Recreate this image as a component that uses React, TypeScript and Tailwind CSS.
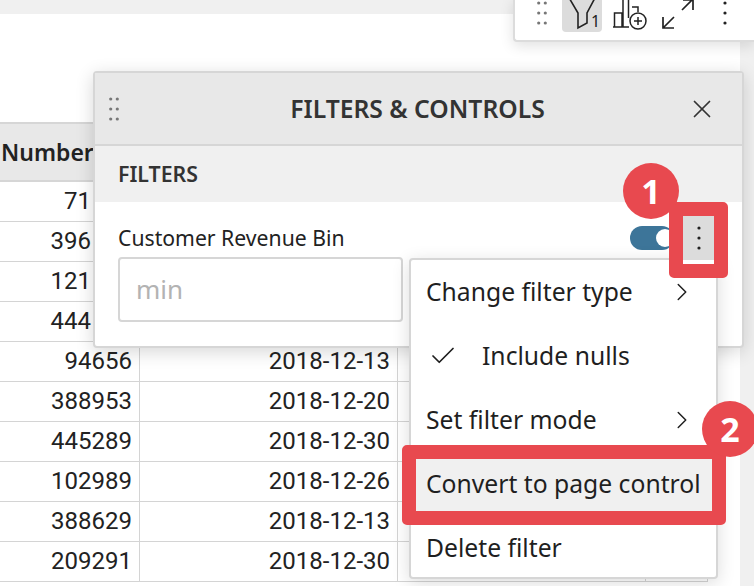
import { Check, ChevronRight, X } from 'lucide-react';

const rows = [
  ['71', '', true],
  ['396', '', true],
  ['121', '', true],
  ['444', '', true],
  ['94656', '2018-12-13'],
  ['388953', '2018-12-20'],
  ['445289', '2018-12-30'],
  ['102989', '2018-12-26'],
  ['388629', '2018-12-13'],
  ['209291', '2018-12-30'],
];

function Grip({ className }: { className: string }) {
  return (
    <svg width="10" height="26" viewBox="0 0 10 26" className={className} fill="#777">
      <circle cx="1.7" cy="3" r="1.6" />
      <circle cx="8.3" cy="3" r="1.6" />
      <circle cx="1.7" cy="13" r="1.6" />
      <circle cx="8.3" cy="13" r="1.6" />
      <circle cx="1.7" cy="23" r="1.6" />
      <circle cx="8.3" cy="23" r="1.6" />
    </svg>
  );
}

function Dots({ className }: { className: string }) {
  return (
    <svg width="6" height="26" viewBox="0 0 6 26" className={className} fill="#222">
      <circle cx="3" cy="3" r="1.6" />
      <circle cx="3" cy="13" r="1.6" />
      <circle cx="3" cy="23" r="1.6" />
    </svg>
  );
}

function Toolbar() {
  return (
    <div className="absolute right-0 top-[-2px] flex h-[44px] w-[241px] items-end rounded-bl-[4px] border-b-2 border-l-2 border-[#dcdcdc] bg-white shadow-[0_4px_14px_rgba(0,0,0,0.12)]">
      <Grip className="mb-[14px] ml-[22px] shrink-0" />
      <div className="mb-[8px] ml-[15px] flex h-[36px] w-[40px] shrink-0 items-end rounded-[4px] bg-[#dcdcdc]">
        <svg width="29" height="36" viewBox="0 0 29 36" fill="none" stroke="#222" strokeWidth="1.6" className="shrink-0 overflow-visible">
          <path d="M6 0 L16 17 V32 L25 27 V17 L34 0" />
        </svg>
        <span className="pb-[1px] text-[16px] leading-[20px] text-[#222]">1</span>
      </div>
      <svg width="36" height="34" viewBox="0 0 36 34" fill="none" stroke="#222" strokeWidth="1.5" className="mb-[10px] ml-[9px] shrink-0">
        <path d="M2 31 H18 M3.5 31 V17 H11 V31 M12 31 V0 H17.5 V22 M21 11 H27 V16" />
        <circle cx="27" cy="25" r="8" />
        <path d="M27 21 V29 M23 25 H31" />
      </svg>
      <svg width="36" height="34" viewBox="0 0 36 34" fill="none" stroke="#222" strokeWidth="1.7" className="mb-[10px] ml-[13px] shrink-0">
        <path d="M3 32 L14 21 M3 21 V32 H14" />
        <path d="M22 14 L33 3 M23 4 H33 V14" />
      </svg>
      <Dots className="mb-[14px] ml-[26px] shrink-0" />
    </div>
  );
}

function MenuItem({ label, chevron, check, active }: { label: string; chevron?: boolean; check?: boolean; active?: boolean }) {
  return (
    <div className={`flex h-[64px] items-center px-[15px] text-[#1f1f1f] ${active ? 'bg-[#f0f0f0]' : ''}`}>
      {check && <Check className="ml-[2px] mr-[24px] h-[30px] w-[30px] shrink-0" strokeWidth={1.4} />}
      <span className="whitespace-nowrap text-[24.7px]">{label}</span>
      {chevron && <ChevronRight className="ml-auto mr-[4px] h-[30px] w-[30px] shrink-0" strokeWidth={1.2} />}
    </div>
  );
}

function Badge({ n, className }: { n: string; className: string }) {
  return (
    <div className={`absolute flex h-[56px] w-[56px] items-center justify-center rounded-full bg-[#e8494f] text-[34px] font-bold text-white ${className}`}>
      {n}
    </div>
  );
}

export default function App() {
  return (
    <div className="relative h-[586px] w-[754px] overflow-hidden bg-[#f0f0f0] font-['Noto_Sans',sans-serif]">
      {/* table card */}
      <div className="mt-[14px] h-[572px] w-[740px] bg-white pt-[108px]">
        <div className="w-[708px] font-['Roboto',sans-serif]">
          <div className="flex h-[60px] items-center border-y-2 border-[#d6d6d6] bg-[#e8e8e8] pl-[1px] font-['Noto_Sans',sans-serif] text-[23px] font-semibold text-[#222]">
            Number
          </div>
          {rows.map((r, i) => (
            <div key={i} className="grid h-[40px] grid-cols-[140px_258px_248px_1fr] border-b border-[#d4d4d4] text-[24px] leading-[39px] text-[#222]">
              <div className={`border-r border-[#d4d4d4] text-right ${r[2] ? 'pr-[48px]' : 'pr-[7px]'}`}>{r[0]}</div>
              <div className="border-r border-[#d4d4d4] pr-[7px] text-right">{r[1]}</div>
              <div className="border-r border-[#d4d4d4]"></div>
              <div className="border-r border-[#d4d4d4]"></div>
            </div>
          ))}
        </div>
      </div>

      <Toolbar />

      {/* filters panel */}
      <div className="absolute left-[93px] top-[71px] h-[277px] w-[651px] rounded-[4px] border-2 border-[#d6d6d6] bg-white shadow-[0_4px_18px_rgba(0,0,0,0.16)]">
        <div className="grid h-[73px] grid-cols-[1fr_auto_1fr] items-center border-b-2 border-[#d6d6d6] bg-[#e8e8e8]">
          <Grip className="ml-[14px]" />
          <span className="pr-[2px] text-[24.7px] font-semibold text-[#333]">FILTERS &amp; CONTROLS</span>
          <X className="mr-[25px] h-[30px] w-[30px] justify-self-end text-[#333]" strokeWidth={1.4} />
        </div>
        <div className="flex h-[56px] items-center bg-[#f0f0f0] pl-[23px] text-[21.3px] font-semibold text-[#333]">FILTERS</div>
        <div className="h-[144px] px-[23px] pt-[21px]">
          <div className="flex h-[30px] items-center">
            <span className="text-[21.2px] text-[#222]">Customer Revenue Bin</span>
            <div className="ml-auto mr-[45px] flex h-[24px] w-[44px] items-center justify-end rounded-full bg-[#3d7599]">
              <div className="h-[18px] w-[18px] rounded-full bg-white"></div>
            </div>
          </div>
          <div className="mt-[4px] flex h-[65px] w-[285px] items-center rounded-[4px] border-2 border-[#d6d6d6] pl-[16px] text-[26px] text-[#b3b3b3]">min</div>
        </div>
      </div>

      {/* filter menu */}
      <div className="absolute left-[409px] top-[258px] h-[321px] w-[309px] rounded-[4px] border-2 border-[#d6d6d6] bg-white shadow-[0_4px_18px_rgba(0,0,0,0.14)]">
        <MenuItem label="Change filter type" chevron />
        <MenuItem label="Include nulls" check />
        <MenuItem label="Set filter mode" chevron />
        <MenuItem label="Convert to page control" active />
        <MenuItem label="Delete filter" />
      </div>

      {/* callouts */}
      <div className="absolute left-[669px] top-[202px] h-[76px] w-[59px] rounded-[5px] border-[14px] border-[#e8494f] bg-white">
        <div className="flex h-[44px] items-center justify-center bg-[#dcdcdc]">
          <Dots className="" />
        </div>
      </div>
      <Badge n="1" className="left-[623px] top-[163px]" />
      <div className="absolute left-[402px] top-[445px] h-[80px] w-[324px] rounded-[5px] border-[14px] border-[#e8494f]"></div>
      <Badge n="2" className="left-[702px] top-[401px]" />
    </div>
  );
}
